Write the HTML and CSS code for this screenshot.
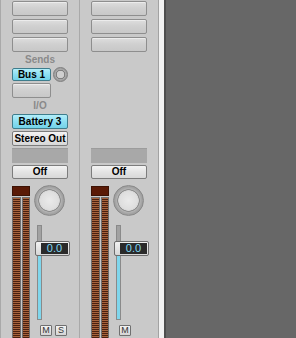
FILE: index.html
```html
<!DOCTYPE html>
<html>

<head>
  <meta charset="UTF-8">
  <meta name="viewport" content="width=device-width, initial-scale=1">
  <title>Mixer strips</title>
  <link rel="stylesheet" href="styles.css">
</head>

<body>

  <div class="mixer">

    <!-- channel strip 1 -->
    <div class="strip">
      <div class="slot slot-first"></div>
      <div class="slot"></div>
      <div class="slot"></div>

      <div class="label">Sends</div>
      <div class="send-row">
        <div class="btn btn-cyan btn-send">Bus 1</div>
        <div class="knob-small"></div>
      </div>
      <div class="slot slot-send"></div>

      <div class="label">I/O</div>
      <div class="btn btn-cyan">Battery 3</div>
      <div class="btn btn-light">Stereo Out</div>
      <div class="box"></div>
      <div class="btn btn-light btn-off">Off</div>

      <div class="lower">
        <div class="meters">
          <div class="clip"></div>
          <div class="bars">
            <div class="bar"></div>
            <div class="bar"></div>
          </div>
        </div>
        <div class="controls">
          <div class="knob"></div>
          <div class="fader">
            <div class="track"></div>
            <div class="cap"><span class="readout">0.0</span></div>
          </div>
          <div class="ms-row">
            <div class="ms">M</div>
            <div class="ms">S</div>
          </div>
        </div>
      </div>
    </div>

    <!-- channel strip 2 (output) -->
    <div class="strip">
      <div class="slot slot-first"></div>
      <div class="slot"></div>
      <div class="slot"></div>

      <div class="gap"></div>
      <div class="box"></div>
      <div class="btn btn-light btn-off">Off</div>

      <div class="lower">
        <div class="meters">
          <div class="clip"></div>
          <div class="bars">
            <div class="bar"></div>
            <div class="bar"></div>
          </div>
        </div>
        <div class="controls">
          <div class="knob"></div>
          <div class="fader">
            <div class="track"></div>
            <div class="cap"><span class="readout">0.0</span></div>
          </div>
          <div class="ms-row">
            <div class="ms">M</div>
          </div>
        </div>
      </div>
    </div>

    <div class="edge"></div>
    <div class="desk"></div>

  </div>

</body>

</html>
```

FILE: styles.css
```css
html,
body {
  margin: 0;
  padding: 0;
  overflow: hidden;
}

body {
  background: #676767;
  font-family: 'Liberation Sans', Arial, sans-serif;
  color: #000;
}

.mixer {
  display: flex;
  height: 338px;
}

.strip {
  box-sizing: border-box;
  width: 79px;
  flex: 0 0 79px;
  padding: 0 11px;
  border-left: 1px solid #a9a9a9;
  background: #c9c9c9;
  display: flex;
  flex-direction: column;
  overflow: hidden;
}

/* nothing in a strip may squash, the bottom just runs off the window */
.strip > * {
  flex-shrink: 0;
}

/* empty insert slots */
.slot {
  box-sizing: border-box;
  height: 15px;
  margin-top: 3px;
  border: 1px solid #8e8e8e;
  border-radius: 2px;
  background: linear-gradient(#dedede, #d0d0d0 45%, #c8c8c8);
  box-shadow: inset 0 1px 0 #ececec;
}

.slot-first {
  margin-top: 1px;
}

.slot-send {
  width: 39px;
  margin-top: 2px;
}

.label {
  height: 12px;
  margin-top: 2px;
  line-height: 12px;
  text-align: center;
  font-size: 10px;
  font-weight: bold;
  color: #8a8a8a;
}

.btn {
  box-sizing: border-box;
  height: 15px;
  margin-top: 2px;
  border: 1px solid #7c7c7c;
  border-radius: 2px;
  font-size: 10px;
  font-weight: bold;
  line-height: 13px;
  text-align: center;
  white-space: nowrap;
}

.btn-cyan {
  border-color: #3f7d8c;
  background: linear-gradient(#b2eefa, #8ddff2 50%, #72d2e8);
}

.btn-light {
  background: linear-gradient(#f4f4f4, #e4e4e4 50%, #d8d8d8);
}

.btn-off {
  height: 14px;
  line-height: 12px;
}

.send-row {
  display: flex;
  align-items: center;
  gap: 2px;
  height: 13px;
  margin-top: 2px;
}

.btn-send {
  width: 39px;
  height: 13px;
  margin-top: 0;
  line-height: 11px;
}

.knob-small {
  box-sizing: border-box;
  width: 15px;
  height: 15px;
  flex: 0 0 15px;
  border-radius: 50%;
  border: 1px solid #7e7e7e;
  background: radial-gradient(circle, #cfcfcf 0 3.5px, #808080 4px 4.5px, #a8a8a8 5px, #989898 7px);
}

.box {
  box-sizing: border-box;
  height: 15px;
  margin-top: 2px;
  background: #a8a8a8;
  border-top: 1px solid #9c9c9c;
}

.gap {
  height: 94px;
}

/* meters, knob, fader */
.lower {
  display: flex;
  margin-top: 6px;
}

.meters {
  width: 18px;
  flex: 0 0 18px;
}

.clip {
  box-sizing: border-box;
  height: 10px;
  margin-top: 1px;
  background: #5a1a06;
  border: 1px solid #3c1204;
}

.bars {
  display: flex;
  gap: 1px;
  margin-top: 1px;
  height: 160px;
}

.bar {
  box-sizing: border-box;
  flex: 1;
  border: 1px solid #6e6e6e;
  background: repeating-linear-gradient(to bottom, #a8643c 0 1px, #4a2010 1px 2px);
}

.controls {
  margin-left: 4px;
  width: 36px;
}

.knob {
  box-sizing: border-box;
  width: 31px;
  height: 31px;
  border-radius: 50%;
  border: 1px solid #8a8a8a;
  background:
    radial-gradient(circle, #eaeaea 0, #dedede 9px, #d4d4d4 10px, #8e8e8e 10.5px 11px, #b4b4b4 11.5px, #a6a6a6 13px, #9a9a9a 15px);
}

.fader {
  position: relative;
  height: 95px;
  margin-top: 9px;
}

.track {
  box-sizing: border-box;
  width: 5px;
  height: 95px;
  margin-left: 3px;
  border: 1px solid #8a8a8a;
  background: linear-gradient(to bottom, #a2a2a2 0 24px, #7fd6ec 24px);
}

/* fader cap sits over the track */
.cap {
  position: absolute;
  top: 16px;
  left: 1px;
  box-sizing: border-box;
  width: 35px;
  height: 15px;
  padding: 1px 1px 1px 5px;
  border: 1px solid #6c6c6c;
  border-radius: 2px;
  background: linear-gradient(#f2f2f2, #d6d6d6);
}

.readout {
  display: block;
  height: 11px;
  background: #2a2a2a;
  color: #80d8f4;
  font-size: 11px;
  line-height: 11px;
  text-align: center;
}

.ms-row {
  display: flex;
  gap: 3px;
  margin-top: 5px;
  padding-left: 6px;
}

.ms {
  box-sizing: border-box;
  width: 12px;
  height: 11px;
  border: 1px solid #707070;
  border-radius: 1px;
  background: linear-gradient(#f2f2f2, #d4d4d4);
  font-size: 9px;
  line-height: 9px;
  text-align: center;
  color: #333;
}

.edge {
  box-sizing: border-box;
  width: 8px;
  flex: 0 0 8px;
  border-left: 1px solid #a2a2a2;
  border-right: 2px solid #4e4e4e;
  background: #f2f2f2;
}

.desk {
  flex: 1;
  background: #676767;
}
```
